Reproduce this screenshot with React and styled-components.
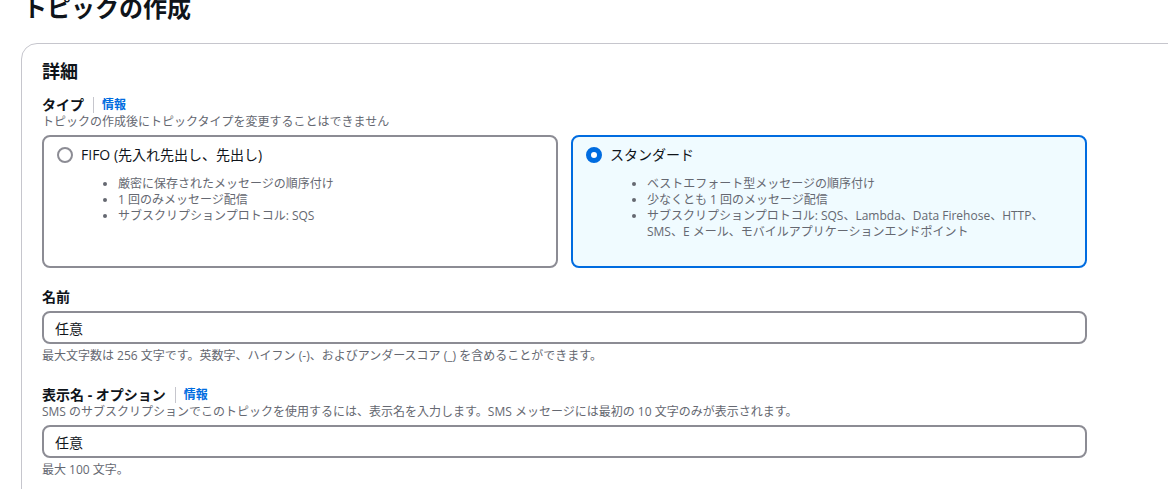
import React from "react";
import styled, { createGlobalStyle } from "styled-components";

const Global = createGlobalStyle`
  html, body { margin: 0; padding: 0; background: #ffffff; overflow: hidden; }
  body {
    font-family: "Open Sans", "Noto Sans CJK JP", sans-serif;
    color: #0f141a;
    width: 1168px;
    height: 489px;
  }
  * { box-sizing: border-box; }
`;

const Page = styled.div`
  padding-left: 21px;
  width: 1240px;
`;

const Title = styled.h1`
  margin: -7px 0 20px 2px;
  font-size: 24px;
  line-height: 30px;
  font-weight: 700;
  color: #0f141a;
`;

const Card = styled.section`
  border: 1px solid #c6c6cd;
  border-radius: 16px;
  width: 1220px;
  padding: 16px 20px 40px 20px;
  background: #ffffff;
`;

const Inner = styled.div`
  width: 1045px;
  display: flex;
  flex-direction: column;
`;

const Heading = styled.h2`
  margin: 0 0 14px 0;
  font-size: 18px;
  line-height: 22px;
  font-weight: 700;
`;

const Field = styled.div`
  display: flex;
  flex-direction: column;
  margin-top: ${(p) => p.$top || 0}px;
`;

const LabelRow = styled.div`
  display: flex;
  align-items: center;
  height: 18px;
`;

const Label = styled.span`
  font-size: 14px;
  line-height: 18px;
  font-weight: 700;
`;

const Divider = styled.span`
  width: 1px;
  height: 16px;
  background: #c6c6cd;
  margin: 0 8px 0 9px;
`;

const Info = styled.a`
  font-size: 12px;
  line-height: 16px;
  font-weight: 700;
  color: #006ce0;
  text-decoration: none;
`;

const Desc = styled.div`
  font-size: 12px;
  line-height: 16px;
  color: #656871;
`;

const Tiles = styled.div`
  display: grid;
  grid-template-columns: 1fr 1fr;
  gap: 13px;
  margin-top: 5px;
`;

const Tile = styled.div`
  border: 2px solid ${(p) => (p.$selected ? "#006ce0" : "#8c8c94")};
  background: ${(p) => (p.$selected ? "#f0fbff" : "#ffffff")};
  border-radius: 8px;
  padding: 8px 12px 26px 13px;
  display: flex;
  flex-direction: column;
  gap: 11px;
`;

const RadioRow = styled.div`
  display: flex;
  align-items: center;
  gap: 8px;
  height: 20px;
`;

const Radio = styled.span`
  width: 16px;
  height: 16px;
  border-radius: 50%;
  border: ${(p) => (p.$checked ? "5px solid #006ce0" : "2px solid #8c8c94")};
  background: #ffffff;
  flex: none;
`;

const TileLabel = styled.span`
  font-size: 14px;
  line-height: 20px;
  color: #0f141a;
`;

const List = styled.ul`
  margin: 0;
  padding-left: 61px;
  font-size: 12px;
  line-height: 16px;
  color: #656871;
  li::marker { color: #656871; }
`;

const Input = styled.div`
  margin-top: 5px;
  height: 33px;
  border: 2px solid #8c8c94;
  border-radius: 8px;
  display: flex;
  align-items: center;
  padding: 0 11px;
  font-size: 14px;
  color: #0f141a;
`;

const Hint = styled.div`
  margin-top: 4px;
  font-size: 12px;
  line-height: 16px;
  color: #656871;
`;

export default function App() {
  return (
    <Page>
      <Global />
      <Title>トピックの作成</Title>
      <Card>
        <Inner>
          <Heading>詳細</Heading>
          <Field>
            <LabelRow>
              <Label>タイプ</Label>
              <Divider />
              <Info href="#">情報</Info>
            </LabelRow>
            <Desc>トピックの作成後にトピックタイプを変更することはできません</Desc>
            <Tiles>
              <Tile>
                <RadioRow>
                  <Radio />
                  <TileLabel>FIFO (先入れ先出し、先出し)</TileLabel>
                </RadioRow>
                <List>
                  <li>厳密に保存されたメッセージの順序付け</li>
                  <li>1 回のみメッセージ配信</li>
                  <li>サブスクリプションプロトコル: SQS</li>
                </List>
              </Tile>
              <Tile $selected>
                <RadioRow>
                  <Radio $checked />
                  <TileLabel>スタンダード</TileLabel>
                </RadioRow>
                <List>
                  <li>ベストエフォート型メッセージの順序付け</li>
                  <li>少なくとも 1 回のメッセージ配信</li>
                  <li>
                    サブスクリプションプロトコル: SQS、Lambda、Data Firehose、HTTP、
                    <br />
                    SMS、E メール、モバイルアプリケーションエンドポイント
                  </li>
                </List>
              </Tile>
            </Tiles>
          </Field>
          <Field $top={20}>
            <LabelRow>
              <Label>名前</Label>
            </LabelRow>
            <Input>任意</Input>
            <Hint>最大文字数は 256 文字です。英数字、ハイフン (-)、およびアンダースコア (_) を含めることができます。</Hint>
          </Field>
          <Field $top={22}>
            <LabelRow>
              <Label>表示名 - オプション</Label>
              <Divider />
              <Info href="#">情報</Info>
            </LabelRow>
            <Desc>SMS のサブスクリプションでこのトピックを使用するには、表示名を入力します。SMS メッセージには最初の 10 文字のみが表示されます。</Desc>
            <Input>任意</Input>
            <Hint>最大 100 文字。</Hint>
          </Field>
        </Inner>
      </Card>
    </Page>
  );
}
